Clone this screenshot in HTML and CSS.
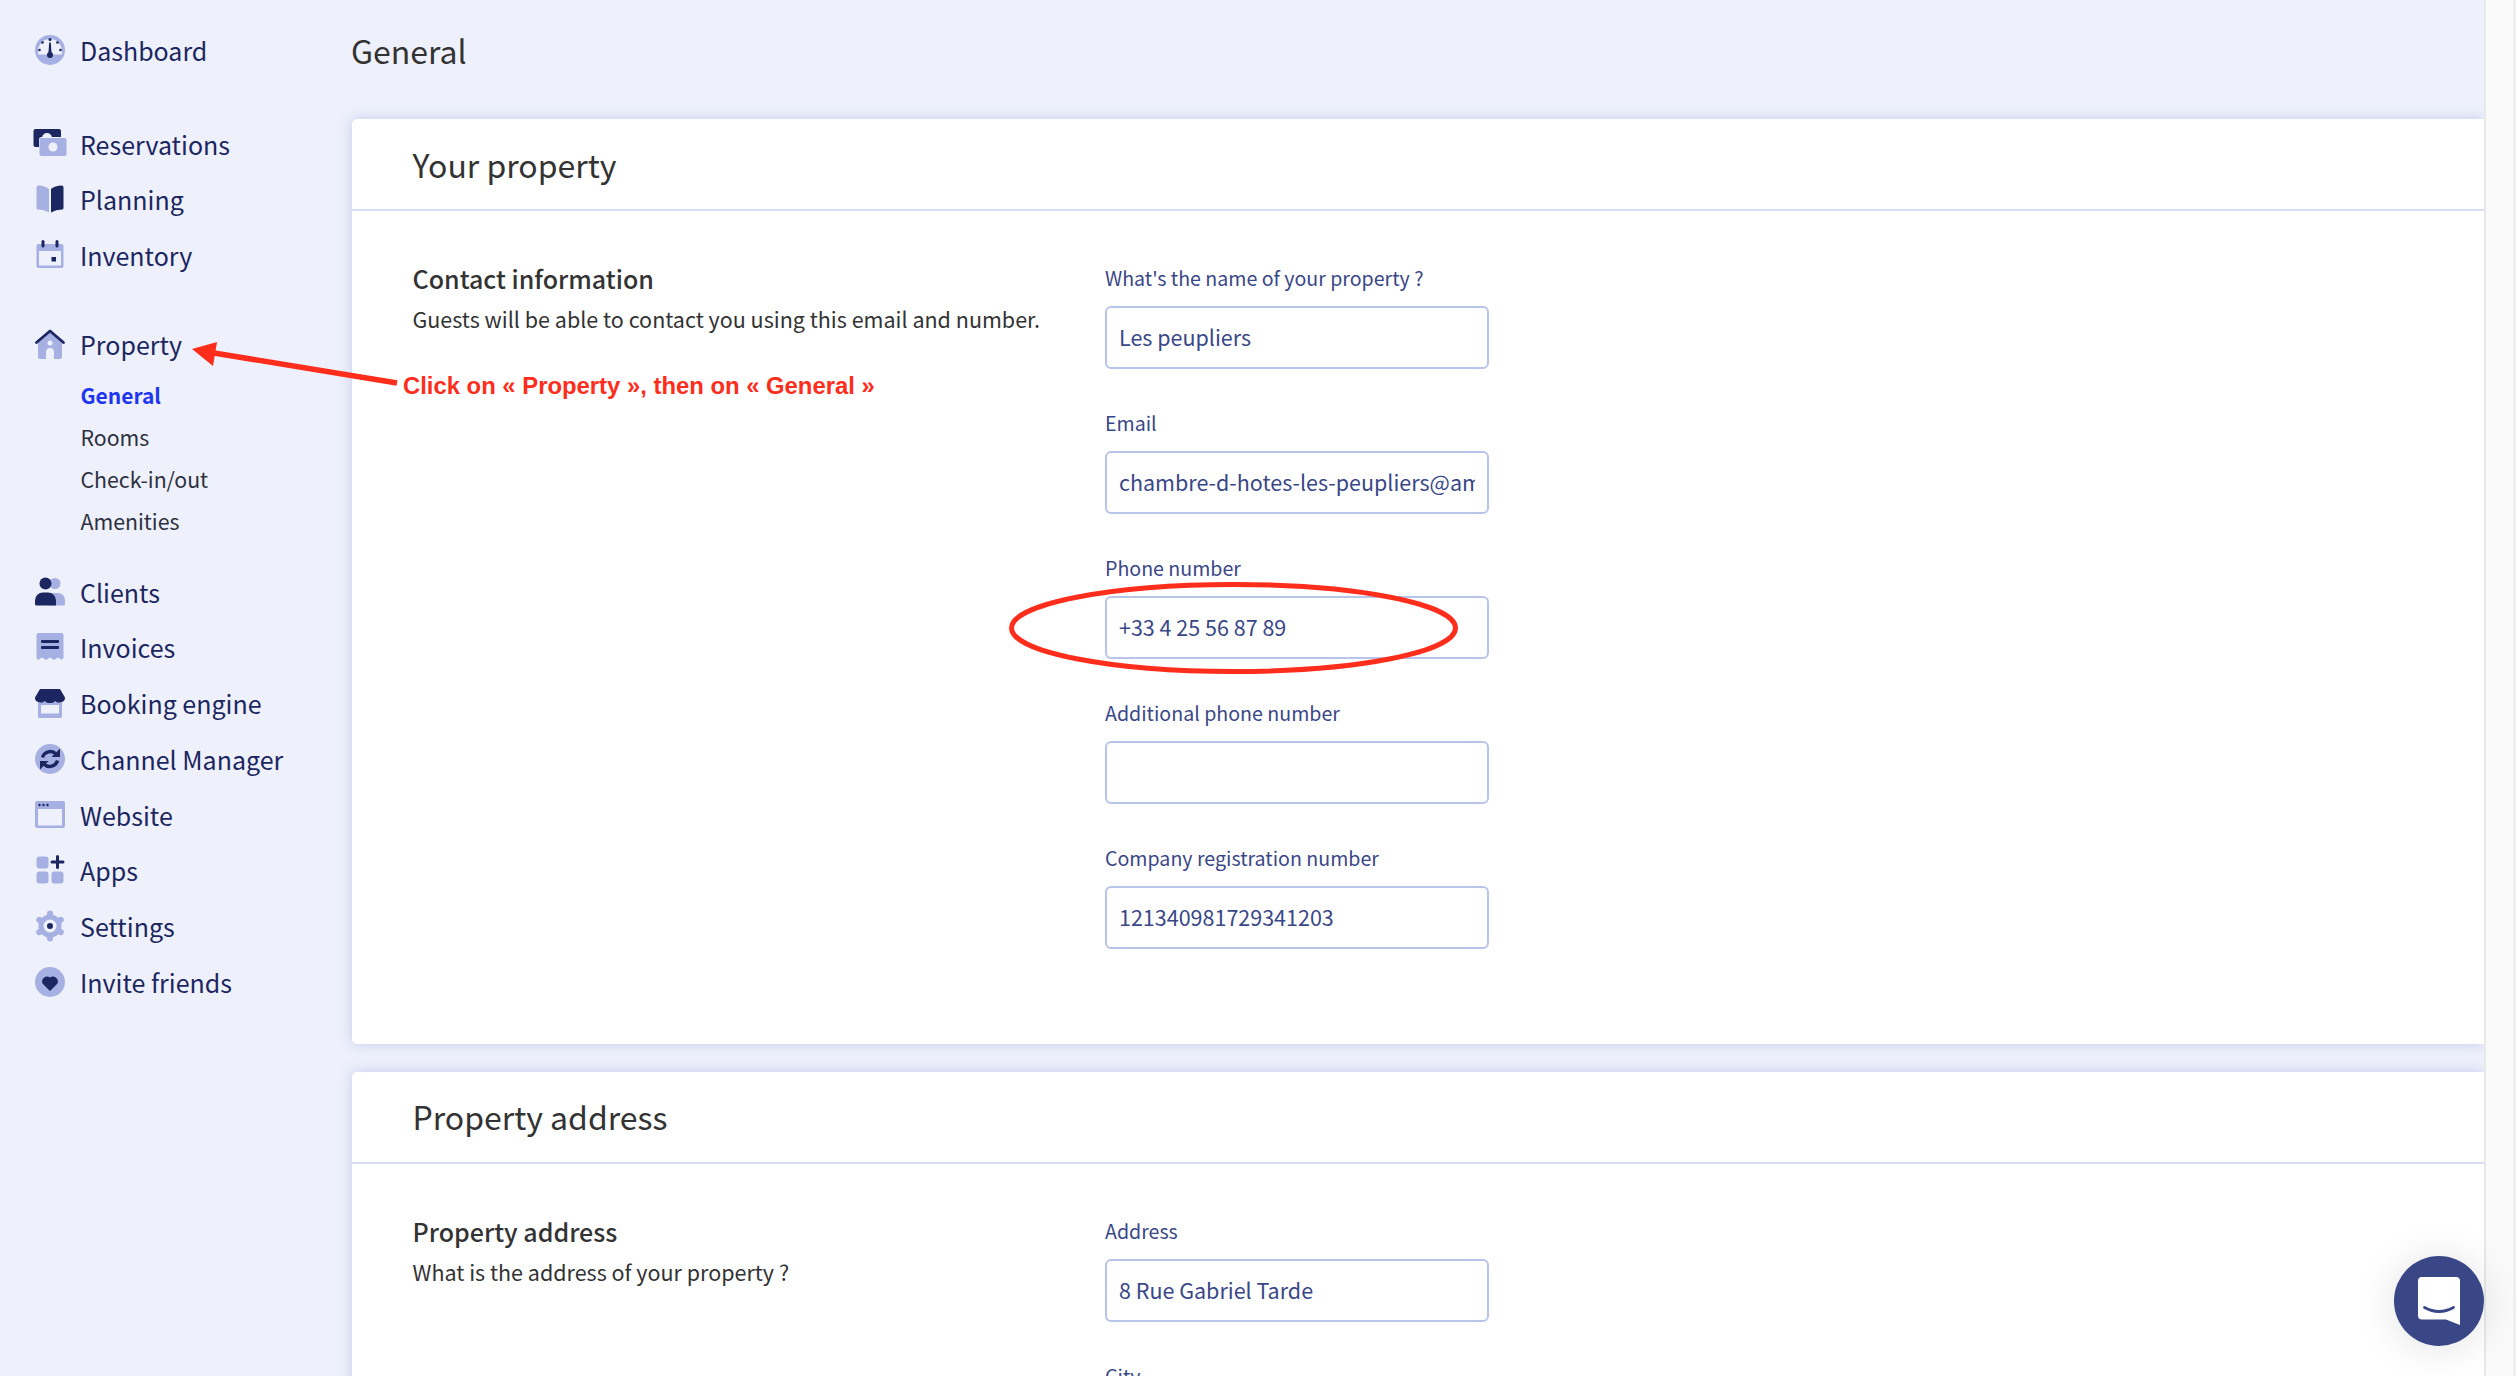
FILE: index.html
```html
<!DOCTYPE html>
<html lang="en">
<head>
    <meta charset="UTF-8">
    <title>General</title>
    <link rel="stylesheet" href="styles.css">
</head>
<body>
    <div class="app">
        <div class="sidebar">
            <div class="nav-group nav-top">
                <div class="nav-item">
                    <svg class="nav-icon" viewBox="0 0 30 30"><circle cx="15" cy="15" r="15" fill="#a6b0e3"/><path d="M3.500 19.500A12 12 0 1 1 26.500 19.500Z" fill="#eef1fb"/><circle cx="15" cy="4.500" r="1.500" fill="#1c2660"/><circle cx="7.500" cy="7.500" r="1.300" fill="#1c2660"/><circle cx="22.500" cy="7.500" r="1.300" fill="#1c2660"/><circle cx="4.500" cy="15" r="1.300" fill="#1c2660"/><circle cx="25.500" cy="15" r="1.300" fill="#1c2660"/><path d="M14.200 7.500h1.600l.8 11h-3.200z" fill="#1c2660"/><circle cx="15" cy="20" r="3" fill="#1c2660"/></svg>
                    <span>Dashboard</span>
                </div>
            </div>
            <div class="nav-group">
                <div class="nav-item">
                    <svg class="nav-icon" viewBox="0 0 30 30"><rect x="-1.500" y="0" width="27.500" height="18" rx="2" fill="#1c2660"/><circle cx="12" cy="9" r="5" fill="#eef1fb"/><rect x="4" y="8" width="28" height="19" rx="2.500" fill="#eef1fb"/><rect x="4.500" y="9" width="27" height="18" rx="2" fill="#a6b0e3"/><circle cx="18" cy="18" r="4.500" fill="#eef1fb"/></svg>
                    <span>Reservations</span>
                </div>
                <div class="nav-item">
                    <svg class="nav-icon" viewBox="0 0 30 30"><path d="M1.500 3.500Q1.500 1.500 3.500 1.500Q10 1.500 14 5V28.500Q9 25.500 3 25.500Q1.500 25.500 1.500 24Z" fill="#a6b0e3"/><path d="M28.500 3.500Q28.500 1.500 26.500 1.500Q20 1.500 16 5V28.500Q21 25.500 27 25.500Q28.500 25.500 28.500 24Z" fill="#1c2660"/></svg>
                    <span>Planning</span>
                </div>
                <div class="nav-item">
                    <svg class="nav-icon" viewBox="0 0 30 30"><path d="M3.500 4H26.500A2 2 0 0 1 28.500 6V26A2 2 0 0 1 26.500 28H3.500A2 2 0 0 1 1.500 26V6A2 2 0 0 1 3.500 4ZM4 11V25.500H26V11Z" fill="#a6b0e3" fill-rule="evenodd"/><rect x="6.500" y="0" width="3" height="7.500" rx="1.500" fill="#1c2660"/><rect x="20.500" y="0" width="3" height="7.500" rx="1.500" fill="#1c2660"/><rect x="16.500" y="17" width="4.500" height="4.500" fill="#1c2660"/></svg>
                    <span>Inventory</span>
                </div>
            </div>
            <div class="nav-group">
                <div class="nav-item">
                    <svg class="nav-icon" viewBox="0 0 30 30"><path d="M15 3.500L3 13.500V28A2 2 0 0 0 5 30H11V23A4 4 0 0 1 19 23V30H25A2 2 0 0 0 27 28V13.500Z" fill="#a6b0e3"/><circle cx="15" cy="14" r="2.500" fill="#eef1fb"/><path d="M1.500 13.500L15 2L28.500 13.500" fill="none" stroke="#1c2660" stroke-width="2.800" stroke-linecap="round" stroke-linejoin="round"/></svg>
                    <span>Property</span>
                </div>
                <div class="sub-nav">
                    <div class="sub-item active">General</div>
                    <div class="sub-item">Rooms</div>
                    <div class="sub-item">Check-in/out</div>
                    <div class="sub-item">Amenities</div>
                </div>
            </div>
            <div class="nav-group">
                <div class="nav-item">
                    <svg class="nav-icon" viewBox="0 0 30 30"><circle cx="20" cy="6.500" r="5.500" fill="#a6b0e3"/><path d="M14 16H23A7 7 0 0 1 30 23V27A1.500 1.500 0 0 1 28.500 28.500H14Z" fill="#a6b0e3"/><circle cx="10.500" cy="6.500" r="6" fill="#1c2660"/><path d="M8 15.500H13A8 8 0 0 1 21 23.500V28.500H1.500A1.500 1.500 0 0 1 0 27V23.500A8 8 0 0 1 8 15.500Z" fill="#1c2660"/></svg>
                    <span>Clients</span>
                </div>
                <div class="nav-item">
                    <svg class="nav-icon" viewBox="0 0 30 30"><path d="M3.500 1H26.500A2 2 0 0 1 28.500 3V25.500L27 28L23 25.500L19 28L15 25.500L11 28L7 25.500L3 28L1.500 25.500V3A2 2 0 0 1 3.500 1Z" fill="#a6b0e3"/><rect x="6" y="8" width="18" height="3" rx="1" fill="#1c2660"/><rect x="6" y="14" width="18" height="3" rx="1" fill="#1c2660"/></svg>
                    <span>Invoices</span>
                </div>
                <div class="nav-item">
                    <svg class="nav-icon" viewBox="0 0 30 30"><path d="M3 12H27V28.500A1.500 1.500 0 0 1 25.500 30H4.500A1.500 1.500 0 0 1 3 28.500ZM6 17V25.500H24V17Z" fill="#a6b0e3" fill-rule="evenodd"/><path d="M5 1H25L30 9.500A4 4 0 0 1 26 14A5 5 0 0 1 20.300 13A5.500 5.500 0 0 1 15 15A5.500 5.500 0 0 1 9.700 13A5 5 0 0 1 4 14A4 4 0 0 1 0 9.500Z" fill="#1c2660"/></svg>
                    <span>Booking engine</span>
                </div>
                <div class="nav-item">
                    <svg class="nav-icon" viewBox="0 0 30 30"><circle cx="15" cy="15" r="15" fill="#a6b0e3"/><path d="M7.500 13.500A8 8 0 0 1 21 10" fill="none" stroke="#1c2660" stroke-width="3.400"/><path d="M16.500 13H25V4.500Z" fill="#1c2660"/><path d="M22.500 16.500A8 8 0 0 1 9 20" fill="none" stroke="#1c2660" stroke-width="3.400"/><path d="M13.500 17H5V25.500Z" fill="#1c2660"/></svg>
                    <span>Channel Manager</span>
                </div>
                <div class="nav-item">
                    <svg class="nav-icon" viewBox="0 0 30 30"><path d="M2 1H28A2 2 0 0 1 30 3V26A2 2 0 0 1 28 28H2A2 2 0 0 1 0 26V3A2 2 0 0 1 2 1ZM3 9V25.500H27V9Z" fill="#a6b0e3" fill-rule="evenodd"/><circle cx="4.500" cy="5" r="1.200" fill="#1c2660"/><circle cx="8.500" cy="5" r="1.200" fill="#1c2660"/><circle cx="12.500" cy="5" r="1.200" fill="#1c2660"/></svg>
                    <span>Website</span>
                </div>
                <div class="nav-item">
                    <svg class="nav-icon" viewBox="0 0 30 30"><rect x="1.500" y="1.500" width="12" height="12" rx="3" fill="#a6b0e3"/><rect x="1.500" y="16.500" width="12" height="12" rx="3" fill="#a6b0e3"/><rect x="16.500" y="16.500" width="12" height="12" rx="3" fill="#a6b0e3"/><path d="M22.500 1.500V12.500M17 7H28" stroke="#1c2660" stroke-width="3" stroke-linecap="round"/></svg>
                    <span>Apps</span>
                </div>
                <div class="nav-item">
                    <svg class="nav-icon" viewBox="0 0 30 30"><circle cx="15" cy="15" r="11.500" fill="#a6b0e3"/><g stroke="#a6b0e3" stroke-width="6" stroke-linecap="round"><path d="M15 2.500V27.500"/><path d="M4.200 8.800L25.800 21.200"/><path d="M4.200 21.200L25.800 8.800"/></g><circle cx="15" cy="15" r="6.500" fill="#eef1fb"/><circle cx="15" cy="15" r="3" fill="#1c2660"/></svg>
                    <span>Settings</span>
                </div>
                <div class="nav-item">
                    <svg class="nav-icon" viewBox="0 0 30 30"><circle cx="15" cy="15" r="15" fill="#a6b0e3"/><path d="M15 24L7.500 16.500A5 5 0 0 1 15 10.500A5 5 0 0 1 22.500 16.500Z" fill="#1c2660"/></svg>
                    <span>Invite friends</span>
                </div>
            </div>
        </div>

        <div class="main">
            <h1 class="page-title">General</h1>

            <div class="card">
                <h2 class="card-title">Your property</h2>
                <div class="card-body">
                    <div class="card-intro">
                        <h3>Contact information</h3>
                        <p>Guests will be able to contact you using this email and number.</p>
                    </div>
                    <div class="fields">
                        <div class="field">
                            <label>What's the name of your property ?</label>
                            <input type="text" value="Les peupliers">
                        </div>
                        <div class="field">
                            <label>Email</label>
                            <input type="text" value="chambre-d-hotes-les-peupliers@amail.com">
                        </div>
                        <div class="field">
                            <label>Phone number</label>
                            <input type="text" value="+33 4 25 56 87 89">
                        </div>
                        <div class="field">
                            <label>Additional phone number</label>
                            <input type="text" value="">
                        </div>
                        <div class="field">
                            <label>Company registration number</label>
                            <input type="text" value="121340981729341203">
                        </div>
                    </div>
                </div>
            </div>

            <div class="card">
                <h2 class="card-title">Property address</h2>
                <div class="card-body">
                    <div class="card-intro">
                        <h3>Property address</h3>
                        <p>What is the address of your property ?</p>
                    </div>
                    <div class="fields">
                        <div class="field">
                            <label>Address</label>
                            <input type="text" value="8 Rue Gabriel Tarde">
                        </div>
                        <div class="field">
                            <label>City</label>
                            <input type="text" value="">
                        </div>
                    </div>
                </div>
            </div>
        </div>

        <div class="scroll-track"></div>
    </div>

    <!-- red annotations drawn over the screenshot -->
    <svg class="markup" viewBox="0 0 2518 1376">
        <path d="M397 383L214 353" stroke="#ff2d1c" stroke-width="5.500" fill="none"/>
        <path d="M192 349L217 342L213 366Z" fill="#ff2d1c"/>
        <ellipse cx="1233.500" cy="628" rx="222" ry="43.500" fill="none" stroke="#ff2d1c" stroke-width="5"/>
    </svg>
    <div class="markup-text">Click on « Property », then on « General »</div>

    <div class="chat-btn">
        <svg viewBox="0 0 42 48" width="42" height="48"><path d="M4 0H38A4 4 0 0 1 42 4V48L28 42.500H4A4 4 0 0 1 0 38.500V4A4 4 0 0 1 4 0Z" fill="#fff"/><path d="M6.500 30.500Q21 38.500 35.500 30.500" fill="none" stroke="#3a4787" stroke-width="2.800" stroke-linecap="round"/></svg>
    </div>
</body>
</html>
```

FILE: styles.css
```css
html, body {
    margin: 0;
    padding: 0;
    height: 100%;
}

body {
    background: #fff;
    overflow: hidden;
    font-family: "Noto Sans CJK SC", "Noto Sans", sans-serif;
}

.app {
    display: flex;
    height: 1376px;
    overflow: hidden;
}

/* sidebar */
.sidebar {
    width: 352px;
    flex-shrink: 0;
    box-sizing: border-box;
    padding: 22px 0 0 35px;
    background: #eef1fb;
}

.nav-group {
    margin-bottom: 33px;
}

.nav-top {
    margin-bottom: 38px;
}

.nav-group:nth-child(3) {
    margin-bottom: 22px;
}

.nav-item {
    display: flex;
    align-items: center;
    height: 55.75px;
    gap: 15px;
    color: #1c2660;
    font-size: 25px;
    line-height: 56px;
}

.nav-icon {
    width: 30px;
    height: 30px;
    flex-shrink: 0;
    overflow: visible;
}

.sub-nav {
    padding: 2px 0 0 45.5px;
}

.sub-item {
    height: 42px;
    line-height: 42px;
    font-size: 21.3px;
    color: #2d3040;
}

.sub-item.active {
    color: #1e36f0;
    font-size: 21px;
    font-weight: 700;
}

/* main column */
.main {
    flex: 1;
    min-width: 0;
    background: #eef1fb;
}

.page-title {
    margin: 0 0 0 -1px;
    height: 119px;
    padding-top: 27px;
    box-sizing: border-box;
    font-size: 32px;
    line-height: 46px;
    font-weight: 400;
    color: #333;
}

.card {
    background: #fff;
    border-radius: 5px 0 0 5px;
    box-shadow: 0 0 13px rgba(120, 130, 205, .35);
    margin-bottom: 28px;
}

.card-title {
    margin: 0;
    height: 92px;
    box-sizing: border-box;
    padding: 0 0 0 60.5px;
    border-bottom: 2px solid #d9def3;
    font-size: 32px;
    line-height: 90px;
    font-weight: 400;
    color: #333;
}

.card + .card .card-title {
    line-height: 88px;
}

.card-body {
    display: flex;
    padding: 52px 0 95px 60.5px;
}

.card-intro {
    width: 692.5px;
    flex-shrink: 0;
}

.card-intro h3 {
    margin: 0;
    font-size: 25px;
    line-height: 30px;
    font-weight: 500;
    color: #333;
}

.card-intro p {
    margin: 11px 0 0;
    font-size: 21.5px;
    line-height: 30px;
    color: #333;
}

.fields {
    width: 384px;
}

.field {
    margin-bottom: 39px;
}

.field:last-child {
    margin-bottom: 0;
}

.field label {
    display: block;
    height: 30px;
    margin-bottom: 13px;
    font-size: 19.6px;
    line-height: 30px;
    color: #3a4787;
}

.field input {
    display: block;
    width: 100%;
    height: 63px;
    box-sizing: border-box;
    padding: 0 12px 2px;
    border: 2px solid #b9c4ea;
    border-radius: 6px;
    background: #fff;
    font-family: inherit;
    font-size: 21.5px;
    color: #3a4787;
}

/* fake browser scrollbar */
.scroll-track {
    width: 32px;
    flex-shrink: 0;
    box-sizing: border-box;
    margin-right: 2px;
    background: #fafafa;
    border-left: 2px solid #e9e9e9;
    border-right: 3px solid #efefef;
}

/* red annotations */
.markup {
    position: absolute;
    left: 0;
    top: 0;
    width: 2518px;
    height: 1376px;
    pointer-events: none;
}

.markup-text {
    position: absolute;
    left: 403px;
    top: 370px;
    font-family: "Liberation Sans", Arial, sans-serif;
    font-size: 23.85px;
    line-height: 32px;
    font-weight: 700;
    color: #ff2d1c;
    white-space: nowrap;
}

.chat-btn {
    position: absolute;
    left: 2394px;
    top: 1256px;
    width: 90px;
    height: 90px;
    display: flex;
    align-items: center;
    justify-content: center;
    border-radius: 50%;
    background: #3a4787;
    box-shadow: 0 2px 40px rgba(0, 0, 0, .12);
}
```
